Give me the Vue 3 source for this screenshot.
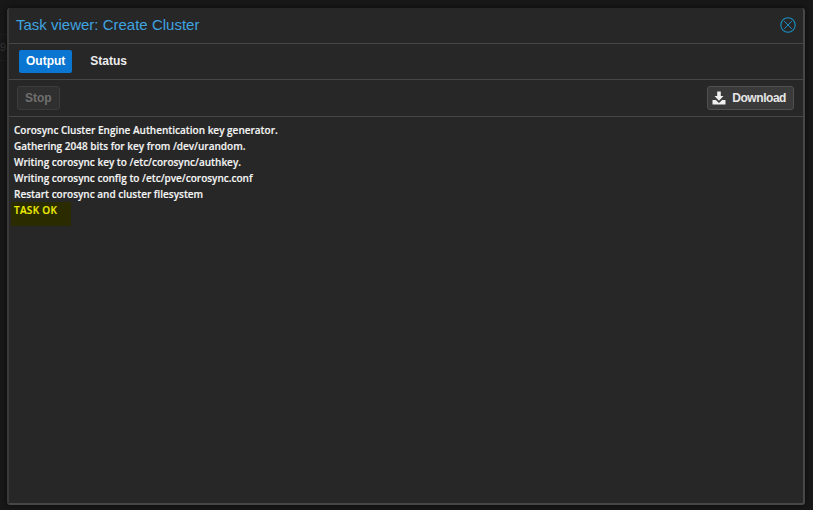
<script setup>
const lines = [
  'Corosync Cluster Engine Authentication key generator.',
  'Gathering 2048 bits for key from /dev/urandom.',
  'Writing corosync key to /etc/corosync/authkey.',
  'Writing corosync config to /etc/pve/corosync.conf',
  'Restart corosync and cluster filesystem',
]
</script>

<template>
  <div class="page">
    <div class="fondo">
      <span class="resto">9</span>
    </div>
    <div class="ventana">
      <header class="titulo">
        <span>Task viewer: Create Cluster</span>
        <svg class="cerrar" width="16" height="16" viewBox="0 0 16 16">
          <circle cx="8" cy="8" r="7.2" fill="none" stroke="#1a8fc4" stroke-width="1.1" />
          <path d="M4.2 4.2 11.8 11.8M11.8 4.2 4.2 11.8" stroke="#1a8fc4" stroke-width="1" />
        </svg>
      </header>
      <nav class="tabs">
        <a class="tab activa">Output</a>
        <a class="tab">Status</a>
      </nav>
      <div class="barra">
        <button class="btn desactivado">Stop</button>
        <button class="btn descarga">
          <svg width="14" height="14" viewBox="0 0 14 14">
            <path d="M5.2 0.5h3.6v4.6h2.7L7 9.8 2.5 5.1h2.7z" fill="#f0f0f0" />
            <path d="M0.5 9h3.4L7 12l3.1-3h3.4v4.5H.5z" fill="#f0f0f0" />
          </svg>
          Download
        </button>
      </div>
      <div class="salida">
        <div v-for="linea in lines" :key="linea" class="linea">{{ linea }}</div>
        <div class="linea ok">TASK OK</div>
      </div>
    </div>
  </div>
</template>

<style scoped>
.page {
  position: relative;
  width: 813px;
  height: 510px;
  background: #181818;
  padding: 8px 8px 5px 7px;
  box-sizing: border-box;
  font-family: "Liberation Sans", Arial, sans-serif;
  overflow: hidden;
}

.fondo {
  position: absolute;
  left: 0;
  top: 34px;
  width: 7px;
  height: 25px;
  border-top: 1px solid #1f1f1f;
  border-bottom: 1px solid #1f1f1f;
}

.resto {
  display: block;
  margin-top: 6px;
  font-size: 11px;
  line-height: 13px;
  color: #3a3a3a;
}

.ventana {
  position: relative;
  height: 100%;
  box-sizing: border-box;
  background: #272727;
  border-right: 2px solid #474747;
  border-bottom: 2px solid #474747;
  border-left: 2px solid #3a3a3a;
  border-radius: 3px;
  display: flex;
  flex-direction: column;
  box-shadow: 0 0 6px #0a0a0a;
}

.titulo {
  height: 36px;
  box-sizing: border-box;
  display: flex;
  align-items: center;
  justify-content: space-between;
  padding: 0 7px 2px 7px;
  color: #3fa3e0;
  font-size: 15px;
  border-bottom: 1px solid #474747;
}

.tabs {
  height: 36px;
  box-sizing: border-box;
  display: flex;
  align-items: center;
  gap: 11px;
  padding: 0 10px;
  border-bottom: 1px solid #474747;
}

.tab {
  height: 23px;
  line-height: 23px;
  padding: 0 7px;
  border-radius: 2px;
  font-size: 12px;
  font-weight: bold;
  color: #eeeeee;
}

.activa {
  background: #0a76d1;
  color: #fff;
}

.barra {
  height: 37px;
  box-sizing: border-box;
  display: flex;
  align-items: center;
  justify-content: space-between;
  padding: 0 9px 0 8px;
  border-bottom: 1px solid #474747;
}

.btn {
  height: 24px;
  display: flex;
  align-items: center;
  padding: 0 7px;
  background: #3a3a3a;
  border: 1px solid #505050;
  border-radius: 3px;
  font-family: inherit;
  font-size: 12px;
  font-weight: bold;
  color: #e6e6e6;
}

.descarga {
  gap: 6px;
  padding: 0 7px 0 4px;
  letter-spacing: -0.45px;
}

.desactivado {
  background: #2f2f2f;
  border-color: #3c3c3c;
  color: #6f6f6f;
}

.salida {
  flex: 1;
  padding: 5px 5px;
  font-family: "Open Sans", sans-serif;
  font-size: 10px;
  font-weight: 600;
  line-height: 16px;
  color: #f4f4f4;
  -webkit-text-stroke: 0.15px #f4f4f4;
}

.ok {
  color: #eeee00;
  -webkit-text-stroke: 0.15px #eeee00;
  background: #2b2b00;
  width: 60px;
  height: 24px;
  margin-left: -3px;
  padding-left: 3px;
  box-sizing: border-box;
  letter-spacing: 0.3px;
}
</style>
